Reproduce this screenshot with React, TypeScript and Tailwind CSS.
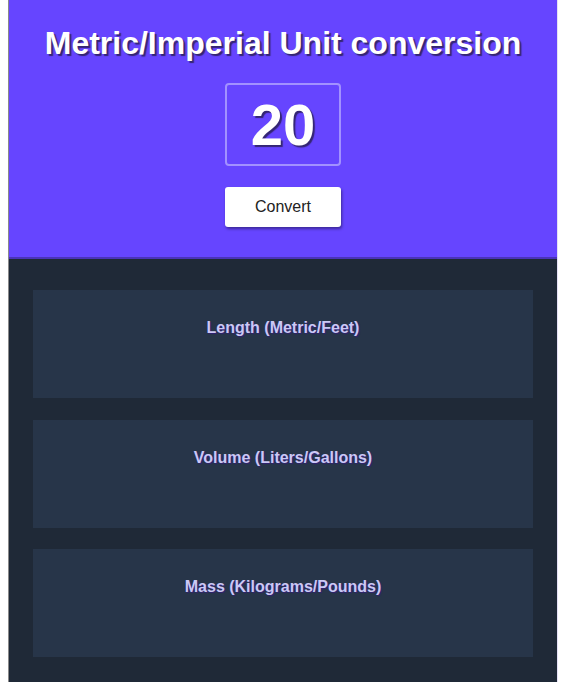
export default function App() {
  const cards = ["Length (Metric/Feet)", "Volume (Liters/Gallons)", "Mass (Kilograms/Pounds)"];
  return (
    <div className="w-[562px] h-[682px] bg-white overflow-hidden" style={{ fontFamily: '"Liberation Sans", Arial, sans-serif' }}>
      <div className="ml-[8px] w-[550px] h-[682px] border-l border-[#8a8a8a] border-r-[1px] border-r-[#e4e0f5] flex flex-col">
        <div className="h-[259px] bg-[#6645ff] border-b-2 border-[#4a33b8] flex flex-col items-center">
          <h1 className="mt-[24px] text-[32px] leading-[38px] font-bold text-white [text-shadow:2px_2px_1px_rgba(40,30,80,0.8)]">
            Metric/Imperial Unit conversion
          </h1>
          <div className="mt-[21px] w-[116px] h-[83px] rounded-[4px] border-2 border-[#a291ff] flex items-center justify-center">
            <span className="text-[58px] leading-none font-bold text-white [text-shadow:2px_2px_1px_rgba(40,30,80,0.8)]">20</span>
          </div>
          <button className="mt-[21px] w-[116px] h-[40px] rounded-[3px] bg-white text-[16px] text-[#222] shadow-[1px_2px_3px_rgba(0,0,0,0.4)]">
            Convert
          </button>
        </div>
        <div className="flex-1 bg-[#1f2937] px-[24px] pt-[31px] flex flex-col gap-[21.5px]">
          {cards.map((c) => (
            <div key={c} className="h-[108px] bg-[#273549] pt-[28px] flex justify-center">
              <span className="text-[16px] leading-[20px] font-bold text-[#cbc8f5] [text-shadow:1px_1px_1px_rgba(50,30,120,0.9)]">{c}</span>
            </div>
          ))}
        </div>
      </div>
    </div>
  );
}
